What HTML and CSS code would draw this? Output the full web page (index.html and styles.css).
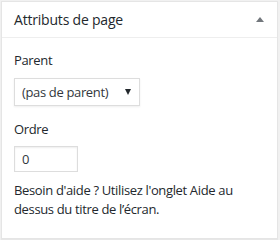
FILE: index.html
```html
<!DOCTYPE html>
<html lang="fr">
<head>
<meta charset="utf-8">
<link rel="stylesheet" href="styles.css">
</head>
<body>
<div class="postbox">
  <div class="postbox-header">
    <h2 class="hndle">Attributs de page</h2>
    <span class="toggle-arrow"></span>
  </div>
  <div class="inside">
    <p class="label">Parent</p>
    <div class="select">
      <span>(pas de parent)</span>
      <span class="select-arrow"></span>
    </div>
    <p class="label label-order">Ordre</p>
    <div class="input">0</div>
    <p class="help">Besoin d'aide ? Utilisez l'onglet Aide au dessus du titre de l’écran.</p>
  </div>
</div>
</body>
</html>
```

FILE: styles.css
```css
* { box-sizing: border-box; }
html, body {
  margin: 0;
  padding: 0;
  background: #f1f1f1;
  width: 280px;
  height: 240px;
  overflow: hidden;
}
body {
  padding: 1px 3px 0 1px;
  font-family: "Open Sans", "Noto Sans", sans-serif;
  color: #23282d;
  font-size: 13px;
  letter-spacing: -0.35px;
}
.postbox {
  width: 277px;
  height: 238px;
  background: #fff;
  border: 1px solid #e5e5e5;
  box-shadow: 0 1px 1px rgba(0,0,0,0.04);
}
.postbox-header {
  height: 36px;
  border-bottom: 1px solid #eee;
  display: flex;
  align-items: center;
  justify-content: space-between;
  padding: 0 12px 0 12px;
}
.hndle {
  margin: 0;
  font-size: 14px;
  font-weight: 400;
  line-height: 1.4;
  color: #23282d;
  letter-spacing: -0.2px;
}
.toggle-arrow {
  width: 0;
  height: 0;
  border-left: 4px solid transparent;
  border-right: 4px solid transparent;
  border-bottom: 5px solid #72777c;
  margin-right: 1px;
}
.inside {
  padding: 13px 12px 12px;
}
.label {
  margin: 0 0 8px;
  line-height: 19px;
  font-size: 13px;
}
.label-order {
  margin-top: 14px;
  margin-bottom: 7px;
}
.select {
  width: 126px;
  height: 28px;
  border: 1px solid #ddd;
  box-shadow: 0 1px 2px rgba(0,0,0,0.07);
  display: flex;
  align-items: center;
  justify-content: space-between;
  padding: 0 8px 0 7px;
  font-size: 13px;
  color: #32373c;
}
.select-arrow {
  width: 0;
  height: 0;
  border-left: 3px solid transparent;
  border-right: 3px solid transparent;
  border-top: 6px solid #23282d;
}
.input {
  width: 64px;
  height: 26px;
  border: 1px solid #ddd;
  box-shadow: inset 0 1px 2px rgba(0,0,0,0.07);
  padding: 0 7px;
  display: flex;
  align-items: center;
  font-size: 13px;
  color: #32373c;
}
.help {
  margin: 9px 0 0;
  line-height: 19px;
  font-size: 13px;
  width: 240px;
}
```
